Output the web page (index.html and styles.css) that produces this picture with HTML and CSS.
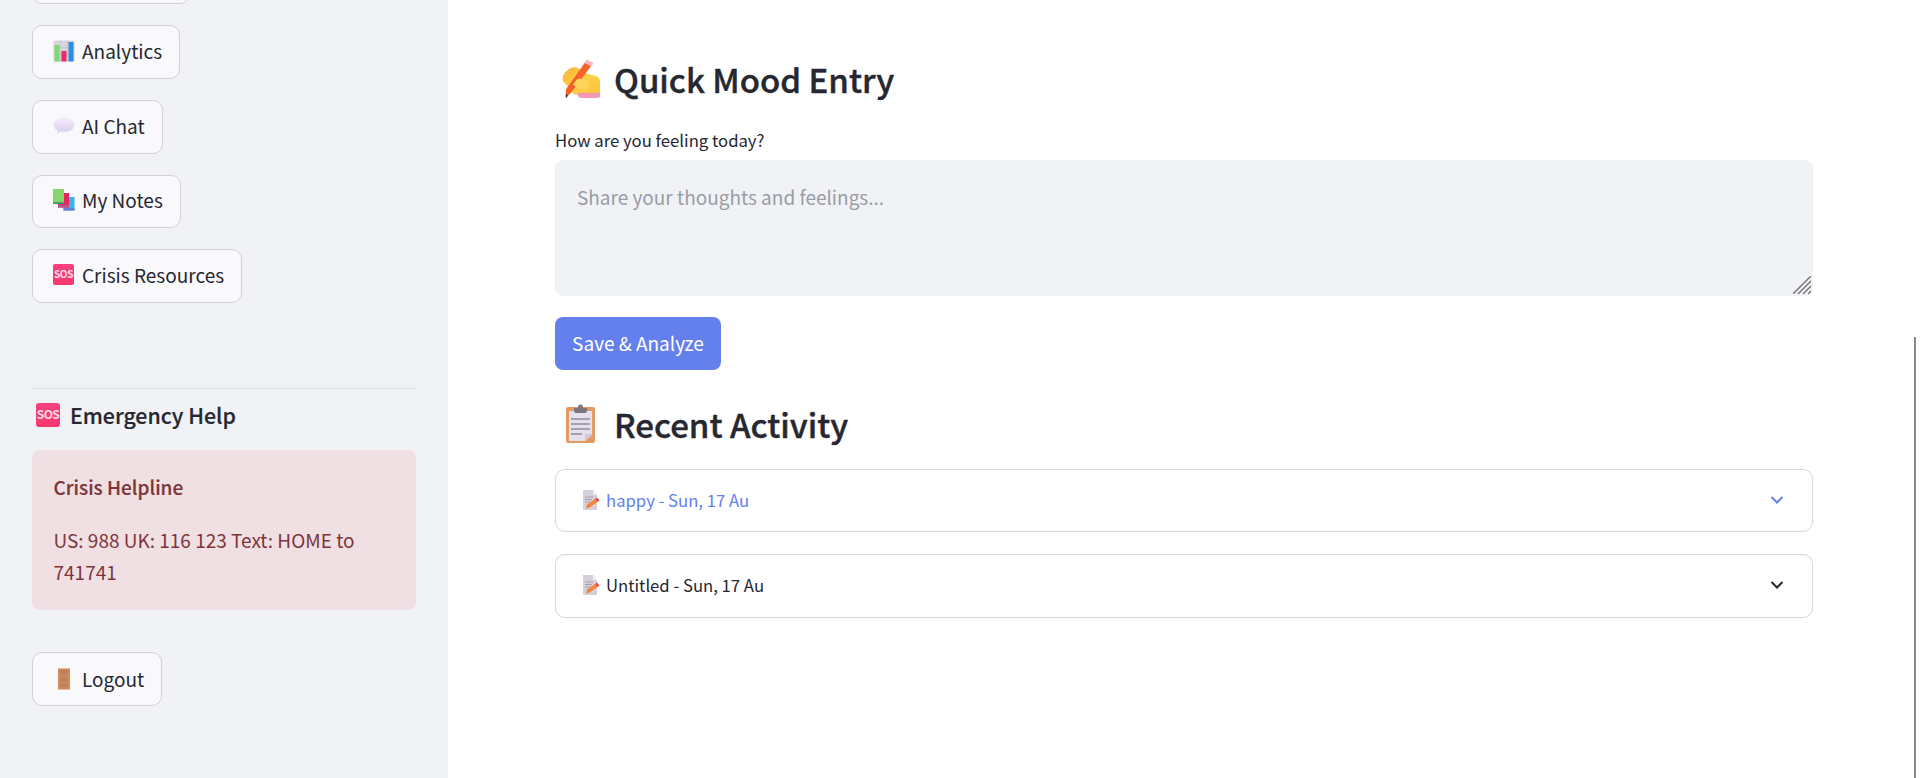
FILE: index.html
```html
<!DOCTYPE html>
<html lang="en">
<head>
  <meta charset="UTF-8">
  <title>Quick Mood Entry</title>
  <link rel="stylesheet" href="styles.css">
</head>
<body>

  <svg class="defs" width="0" height="0">
    <defs>
      <linearGradient id="hand-fill" x1="0" y1="0" x2="1" y2="1">
        <stop offset="0" stop-color="#f9b233"/>
        <stop offset="0.500" stop-color="#fdd04a"/>
        <stop offset="1" stop-color="#fcc33c"/>
      </linearGradient>
      <linearGradient id="bubble-fill" x1="0" y1="0" x2="0" y2="1">
        <stop offset="0" stop-color="#f3eefa"/>
        <stop offset="1" stop-color="#d9cbec"/>
      </linearGradient>
    </defs>
    <symbol id="icon-memo" viewBox="0 0 18 20">
      <path d="M1 0h10l4 5v15H1z" fill="#d6d0dc"/>
      <path d="M11 0l4 5h-4z" fill="#efebf3"/>
      <path d="M3 7h8M3 9.500h7M3 12h5" stroke="#a6a0ae" stroke-width="1"/>
      <path d="M4 18.500l1-4 8-5.500 2.500 3-8 5.500z" fill="#f5843c"/>
      <path d="M13 9l2-1.500 2.500 3-2 1.500z" fill="#f0443e"/>
    </symbol>
  </svg>

  <div class="app">
    <aside class="sidebar">
      <div class="nav">
        <button class="nav-btn nav-cut"></button>

        <button class="nav-btn">
          <svg class="emoji" viewBox="0 0 22 22">
            <rect x="0.500" y="0.500" width="21" height="21" rx="1.500" fill="#d8d5de"/>
            <path d="M7.500 0.500v21M14.500 0.500v21M0.500 7.500h21M0.500 14.500h21" stroke="#c4c0cc" stroke-width="0.700"/>
            <rect x="1.500" y="5" width="5" height="16.500" fill="#7fd86f"/>
            <rect x="8.500" y="11" width="5" height="10.500" fill="#ea2a66"/>
            <rect x="15.500" y="2" width="5" height="19.500" fill="#2c8fe4"/>
          </svg>
          Analytics
        </button>

        <button class="nav-btn">
          <svg class="emoji" viewBox="0 0 22 22">
            <path d="M11 2.500c5.800 0 10.500 2.900 10.500 7.200s-4.700 7.200-10.500 7.200c-1.300 0-2.500-.1-3.700-.4L4.500 19l.2-3.400C2 14.300.5 12.100.5 9.700.5 5.400 5.200 2.500 11 2.500z" fill="url(#bubble-fill)"/>
          </svg>
          AI Chat
        </button>

        <button class="nav-btn">
          <svg class="emoji" viewBox="0 0 22 22">
            <rect x="10.500" y="8" width="11" height="13.500" fill="#38b4ee"/>
            <rect x="10.500" y="19" width="11" height="2.500" fill="#6c7ed6"/>
            <rect x="5" y="4" width="11" height="14.500" fill="#e5265f"/>
            <rect x="5" y="16" width="11" height="2.500" fill="#b9558f"/>
            <rect x="0" y="0" width="11" height="15" fill="#86d66e"/>
            <rect x="0" y="13" width="11" height="2" fill="#4f9a6c"/>
          </svg>
          My Notes
        </button>

        <button class="nav-btn">
          <span class="sos">SOS</span>
          Crisis Resources
        </button>
      </div>

      <div class="help">
        <h3 class="help-title"><span class="sos sos-big">SOS</span>Emergency Help</h3>
        <div class="alert">
          <p class="alert-head">Crisis Helpline</p>
          <p class="alert-text">US: 988 UK: 116 123 Text: HOME to 741741</p>
        </div>
      </div>

      <button class="nav-btn logout">
        <svg class="emoji" viewBox="0 0 22 22">
          <rect x="5" y="0.500" width="12" height="21" rx="0.500" fill="#d48a5a"/>
          <rect x="7" y="2" width="8" height="5.500" fill="#bd8260"/>
          <rect x="7" y="9" width="8" height="5" fill="#bd8260"/>
          <rect x="7" y="15.500" width="8" height="4.500" fill="#bd8260"/>
          <circle cx="15.500" cy="11" r="0.800" fill="#f59a23"/>
        </svg>
        Logout
      </button>
    </aside>

    <main class="main">
      <h2 class="heading">
        <svg class="heading-icon" viewBox="-0.500 -1 38 38">
          <path d="M2 17C3 11 10 6 15 7l5 2 5 4 8 2c3 1 5 3 5 7v11H16c-4 0-6-3-8-7l-4-4c-2-2-2-3-2-5z" fill="url(#hand-fill)"/>
          <path d="M17 31h21v2c0 2-1 3-3 3H20c-3 0-4-3-3-5z" fill="#f49ab0"/>
          <path d="M25 0l6 3-21 28-5 5v-8z" fill="#f4622a"/>
          <path d="M25 0l6 3-2 3-6-3z" fill="#f7b7c4"/>
          <path d="M5 32l2 2-2 2z" fill="#3a2a2a"/>
          <path d="M15 19c4-3 9-1 11 2s0 7-4 7-9-3-10-5z" fill="#fdd55a"/>
        </svg>
        Quick Mood Entry
      </h2>

      <label class="field-label" for="mood">How are you feeling today?</label>
      <div class="area-wrap">
        <textarea class="area" id="mood" placeholder="Share your thoughts and feelings..."></textarea>
        <svg class="area-handle" viewBox="0 0 18 18">
          <path d="M0 18L18 0M5 18L18 5M10 18l8-8M15 18l3-3" stroke="#6f6f74" stroke-width="1.400"/>
        </svg>
      </div>

      <button class="save-btn">Save &amp; Analyze</button>

      <h2 class="heading heading-second">
        <svg class="heading-icon" viewBox="0 0 40 40">
          <rect x="6" y="3" width="29" height="36" rx="2" fill="#e39a62"/>
          <path d="M9 7h23v24l-7 6H9z" fill="#e6e0ee"/>
          <path d="M25 37l7-6v-1h-7z" fill="#cfc6d8"/>
          <path d="M14 4h13v3c0 1-1 2-2 2H16c-1 0-2-1-2-2z" fill="#7b7580"/>
          <circle cx="20.500" cy="3" r="2.500" fill="#7b7580"/>
          <path d="M11 15h19M11 20h19M11 25h19M11 30h11" stroke="#8f8a96" stroke-width="1.300"/>
        </svg>
        Recent Activity
      </h2>

      <div class="expander expander-open">
        <svg class="emoji-small"><use href="#icon-memo"/></svg>
        <span class="expander-title">happy - Sun, 17 Au</span>
        <svg class="chevron" viewBox="0 0 14 10"><path d="M1.500 2l5.500 5.500L12.500 2" fill="none" stroke="currentColor" stroke-width="2"/></svg>
      </div>

      <div class="expander expander-tall">
        <svg class="emoji-small"><use href="#icon-memo"/></svg>
        <span class="expander-title">Untitled - Sun, 17 Au</span>
        <svg class="chevron" viewBox="0 0 14 10"><path d="M1.500 2l5.500 5.500L12.500 2" fill="none" stroke="currentColor" stroke-width="2"/></svg>
      </div>
    </main>
  </div>

  <div class="scroll-thumb"></div>

</body>
</html>
```

FILE: styles.css
```css
* {
  box-sizing: border-box;
}

html, body {
  margin: 0;
  height: 778px;
  overflow: hidden;
}

body {
  font-family: "Noto Sans CJK SC", "Noto Sans", sans-serif;
  font-size: 19px;
  color: #262730;
  background: white;
}

.defs {
  position: absolute;
}

.app {
  display: flex;
  height: 778px;
}

/* sidebar */
.sidebar {
  width: 448px;
  flex: none;
  background: #f0f2f6;
  padding: 0 32px;
  overflow: hidden;
}

.nav {
  display: flex;
  flex-direction: column;
  align-items: flex-start;
  gap: 21px;
  margin-top: -49.500px;
}

.nav-btn {
  display: flex;
  align-items: center;
  gap: 7px;
  height: 53.700px;
  padding: 0 17px 3px 20px;
  background: #f9f9fb;
  border: 1px solid #d1d1d6;
  border-radius: 10px;
  font-family: inherit;
  font-size: 19px;
  color: #262730;
  white-space: nowrap;
}

.nav-cut {
  width: 158px;
}

.emoji {
  width: 22px;
  height: 22px;
  flex: none;
  margin-top: 1px;
}

.sos {
  display: block;
  width: 21px;
  height: 21px;
  flex: none;
  margin-right: 1px;
  border-radius: 2px;
  background: linear-gradient(#f8417f, #f7386b);
  color: #fbdde6;
  font-size: 10px;
  font-weight: 700;
  letter-spacing: -0.400px;
  line-height: 20px;
  text-align: center;
}

.help {
  margin-top: 85px;
  border-top: 1px solid #dcdde2;
}

.help-title {
  display: flex;
  align-items: flex-start;
  gap: 9px;
  margin: 0;
  padding: 12px 0 0 4px;
  height: 61px;
  font-size: 21.300px;
  font-weight: 500;
  line-height: 27px;
  -webkit-text-stroke: 0.200px #262730;
}

.sos-big {
  width: 24px;
  height: 24px;
  margin-top: 2px;
  font-size: 12px;
  font-weight: 700;
  letter-spacing: -0.500px;
  line-height: 22px;
  border-radius: 3px;
  -webkit-text-stroke: 0;
}

.alert {
  background: #f1e0e3;
  border-radius: 8px;
  padding: 21px 21.500px 14px;
  height: 160px;
  color: #7d353b;
  line-height: 32px;
}

.alert p {
  margin: 0;
}

.alert-head {
  font-weight: 500;
  -webkit-text-stroke: 0.200px #7d353b;
}

.alert-text {
  margin-top: 21px !important;
}

.logout {
  margin-top: 42px;
  padding-bottom: 1px;
}

/* main column */
.main {
  flex: 1;
  padding: 49px 107px 0;
}

.heading {
  display: flex;
  align-items: center;
  margin: 0;
  height: 60px;
  font-size: 33px;
  font-weight: 500;
  color: #262730;
  -webkit-text-stroke: 0.400px #262730;
}

.heading-icon {
  width: 40px;
  height: 40px;
  margin: 0 14px 0 5px;
  flex: none;
}

.heading-second {
  margin-top: 24px;
}

.field-label {
  display: block;
  margin-top: 21px;
  margin-bottom: 10px;
  height: 20px;
  font-size: 16.700px;
  line-height: 20px;
}

.area-wrap {
  position: relative;
}

.area {
  display: block;
  width: 100%;
  height: 136px;
  padding: 25px 22px;
  background: #f0f2f6;
  border: none;
  border-radius: 8px;
  font-family: inherit;
  font-size: 19px;
  line-height: 1.3;
  color: #262730;
  outline: none;
  resize: none;
}

.area::placeholder {
  color: #9a9ca5;
}

.area-handle {
  position: absolute;
  right: 2px;
  bottom: 2px;
  width: 18px;
  height: 18px;
}

.save-btn {
  display: block;
  margin-top: 21px;
  height: 53px;
  width: 166px;
  padding: 0 0 2px;
  background: #6480ec;
  border: none;
  border-radius: 8px;
  font-family: inherit;
  font-size: 19px;
  color: white;
}

.expander {
  display: flex;
  align-items: center;
  height: 63px;
  margin-top: 22px;
  padding: 0 28px 2px 26px;
  background: white;
  border: 1px solid #d5d5d9;
  border-radius: 10px;
  font-size: 16.700px;
  color: #262730;
}

.expander-tall {
  height: 64px;
}

.heading-second + .expander {
  margin-top: 15px;
}

.expander-open {
  color: #6480ec;
}

.emoji-small {
  width: 18px;
  height: 20px;
  margin-right: 6px;
  flex: none;
}

.expander-title {
  flex: 1;
}

.chevron {
  width: 14px;
  height: 10px;
  flex: none;
}

.scroll-thumb {
  position: fixed;
  right: 4px;
  top: 337px;
  bottom: 0;
  width: 2px;
  background: #888;
}
```
